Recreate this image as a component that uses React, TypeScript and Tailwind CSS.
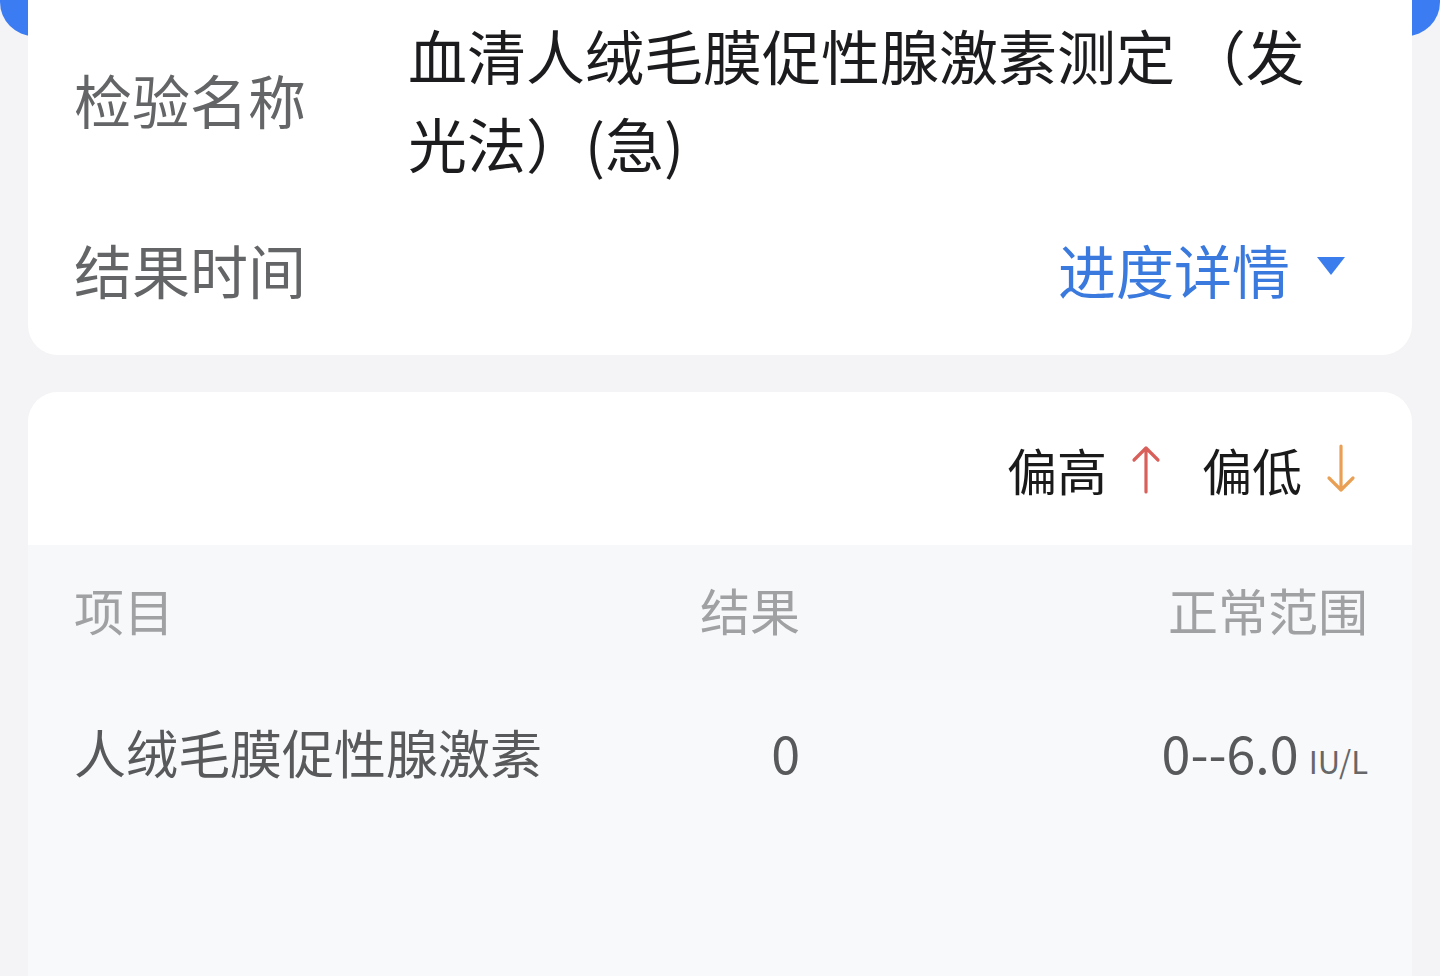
import React from "react";

const font = { fontFamily: '"Noto Sans CJK SC", "Noto Sans", sans-serif' };

function ArrowUp() {
  return (
    <svg width="30" height="50" viewBox="0 0 30 50" fill="none">
      <path d="M15 48 V4 M3 16 L15 4 L27 16" stroke="#d9605a" strokeWidth="3.2" strokeLinecap="round" strokeLinejoin="round" />
    </svg>
  );
}

function ArrowDown() {
  return (
    <svg width="30" height="50" viewBox="0 0 30 50" fill="none">
      <path d="M15 2 V46 M3 34 L15 46 L27 34" stroke="#e9a055" strokeWidth="3.2" strokeLinecap="round" strokeLinejoin="round" />
    </svg>
  );
}

export default function App() {
  return (
    <div className="h-[976px] w-[1440px] overflow-hidden bg-[#f4f4f6]" style={font}>
      <div className="-mt-[40px]">
        <div className="h-[76px] bg-[#3b7cf2] rounded-b-[34px]" />
        <div className="-mt-[76px] mx-[28px] bg-white rounded-[30px] pt-[51px] pb-[42px] pl-[46px] pr-[48px]">
          <div className="flex items-center">
            <div className="w-[334px] shrink-0 text-[58px] leading-[88px] text-[#646566]">检验名称</div>
            <div className="w-[900px] text-[59px] leading-[88px] text-[#1c1c1e]">
              {"血清人绒毛膜促性腺激素测定\u2009（发光法）(急)"}
            </div>
          </div>
          <div className="flex items-center mt-[38px]">
            <div className="flex-1 text-[58px] leading-[88px] text-[#646566]">结果时间</div>
            <div className="flex items-center text-[58px] leading-[88px] text-[#3a79dd]">
              <span>进度详情</span>
              <svg className="ml-[26px] mr-[18px] -mt-[6px]" width="30" height="20" viewBox="0 0 30 20">
                <path d="M1 1 H29 L15 19 Z" fill="#3b7ded" />
              </svg>
            </div>
          </div>
        </div>
        <div className="mt-[37px] mx-[28px] bg-[#f8f9fb] rounded-t-[30px] overflow-hidden h-[700px]">
          <div className="h-[153px] bg-white flex items-center justify-end pr-[56px] text-[50px] leading-[60px] text-[#1a1a1a]">
            <span>偏高</span>
            <span className="ml-[24px] flex items-center"><ArrowUp /></span>
            <span className="ml-[41px]">偏低</span>
            <span className="ml-[24px] flex items-center"><ArrowDown /></span>
          </div>
          <div className="grid grid-cols-[626px_100px_1fr] items-center h-[135px] pl-[46px] pr-[44px] bg-[#f7f8fa] text-[50px] text-[#a0a1a3]">
            <div className="-mt-[6px]">项目</div>
            <div className="text-right whitespace-nowrap -mt-[6px]">结果</div>
            <div className="text-right -mt-[6px]">正常范围</div>
          </div>
          <div className="grid grid-cols-[626px_100px_1fr] items-center h-[144px] pl-[46px] pr-[44px] text-[52px] text-[#58595b]">
            <div className="whitespace-nowrap">人绒毛膜促性腺激素</div>
            <div className="text-right">0</div>
            <div className="text-right whitespace-nowrap">
              0--6.0<span className="ml-[10px] text-[31px] text-[#666769]">IU/L</span>
            </div>
          </div>
        </div>
      </div>
    </div>
  );
}
